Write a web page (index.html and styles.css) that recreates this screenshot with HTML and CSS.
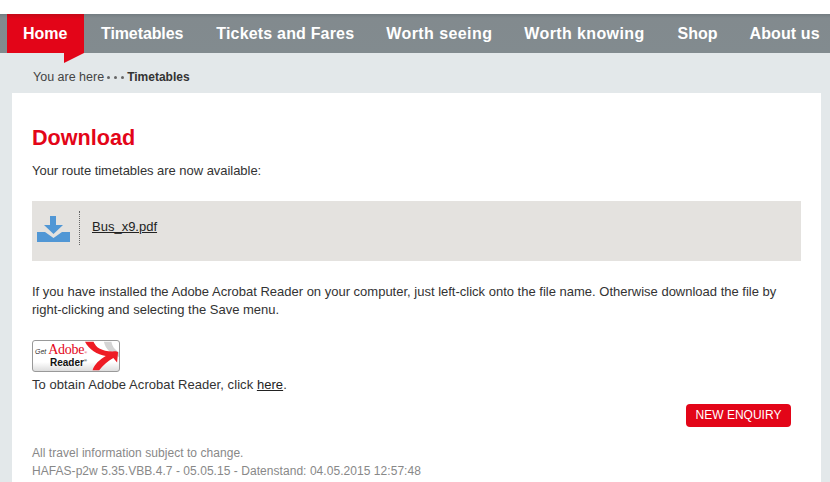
FILE: index.html
```html
<!DOCTYPE html>
<html lang="en">
<head>
<meta charset="utf-8">
<title>Download</title>
<link rel="stylesheet" href="styles.css">
</head>
<body>
<div class="top"></div>
<nav class="nav">
  <a class="item home">Home</a>
  <a class="item i1">Timetables</a>
  <a class="item i2">Tickets and Fares</a>
  <a class="item i3">Worth seeing</a>
  <a class="item i4">Worth knowing</a>
  <a class="item i5">Shop</a>
  <a class="item i6">About us</a>
</nav>
<div class="crumb"><span class="here">You are here</span><span class="dots"><i></i><i></i><i></i></span><b>Timetables</b></div>
<main class="card">
  <h1>Download</h1>
  <p class="intro">Your route timetables are now available:</p>
  <div class="file">
    <svg class="dl" width="33" height="26" viewBox="0 0 33 26"><path fill="#5197d5" d="M13 0h6v9h7l-9.500 9L7 9h6zM0 16h8l8.500 6 8.500-6h8v10H0z"/></svg>
    <a class="link">Bus_x9.pdf</a>
  </div>
  <p class="para">If you have installed the Adobe Acrobat Reader on your computer, just left-click onto the file name. Otherwise download the file by right-clicking and selecting the Save menu.</p>
  <div class="badge">
    <div class="badge-text">
      <div class="l1"><i>Get</i><span>Adobe</span><sup>®</sup></div>
      <div class="l2">Reader<sup>®</sup></div>
    </div>
    <svg class="swoosh" width="36" height="30" viewBox="0 0 36 30"><path fill="#d4d4d4" d="M20 0h8c1 5 3 8 8 11v5C27 13 22 8 20 0z"/><path fill="#ee1c25" d="M0 0h9c3 7 10 11 24 10l2 1-1 11-4-5C24 20 19 25 15 30H8c2-6 7-11 14-15C13 14 4 8 0 0z"/></svg>
  </div>
  <p class="obtain">To obtain Adobe Acrobat Reader, click <a class="link">here</a>.</p>
  <div class="actions"><a class="btn">NEW ENQUIRY</a></div>
  <p class="foot">All travel information subject to change.<br>HAFAS-p2w 5.35.VBB.4.7 - 05.05.15 - Datenstand: 04.05.2015 12:57:48</p>
</main>
</body>
</html>
```

FILE: styles.css
```css
* { box-sizing: border-box; }
html, body { margin: 0; height: 482px; overflow: hidden; }
body { background: #e3e8ea; font-family: "Liberation Sans", Arial, sans-serif; font-size: 13px; color: #333; }
.top { height: 14px; background: #fff; }
.nav { display: flex; height: 39px; background: linear-gradient(#747d82 0, #828a8e 4px, #828b8f 100%); }
.item { font-size: 16px; font-weight: bold; line-height: 39px; color: #fff; white-space: nowrap; }
.home { position: relative; width: 77px; margin-left: 7px; padding-left: 16px; background: linear-gradient(#c40a18 0, #e30518 5px); }
.home::after { content: ""; position: absolute; left: 57px; top: 39px; border-style: solid; border-width: 10px 20px 0 0; border-color: #e30518 transparent transparent transparent; }
.i1 { margin-left: 17px; letter-spacing: -0.1px; }
.i2 { margin-left: 33px; letter-spacing: 0.18px; }
.i3 { margin-left: 32px; letter-spacing: 0.42px; }
.i4 { margin-left: 32px; letter-spacing: 0.38px; }
.i5 { margin-left: 33px; }
.i6 { margin-left: 32px; letter-spacing: 0.1px; }
.crumb { display: flex; align-items: center; height: 40px; padding: 8px 0 0 33px; font-size: 12px; color: #444; }
.here { font-size: 12.500px; }
.dots { display: flex; gap: 4px; margin: 1px 3px 0 3px; }
.dots i { width: 3px; height: 3px; border-radius: 50%; background: #666; }
.crumb b { color: #333; }
.card { margin: 0 9px 0 12px; height: 400px; background: #fff; padding: 31px 20px 0; }
h1 { margin: 0; font-size: 21.600px; line-height: 28px; font-weight: bold; color: #e30518; }
.intro { margin: 11px 0 0; line-height: 16px; letter-spacing: -0.04px; }
.file { display: flex; align-items: center; height: 60px; margin-top: 22px; background: #e4e2df; position: relative; padding-left: 5px; }
.dl { margin-bottom: 4px; }
.link { color: #222; text-decoration: underline; }
.file .link { margin-left: 22px; padding-bottom: 10px; }
.file::before { content: ""; position: absolute; left: 47px; top: 10px; height: 34px; border-left: 1px dotted #666; }
.para { margin: 22px 0 0; line-height: 18px; width: 750px; }
.badge { display: flex; justify-content: space-between; width: 88px; height: 32px; margin-top: 21px; border: 1px solid #999; border-radius: 3px; background: linear-gradient(#fff 70%, #ddd); overflow: hidden; }
.badge-text { flex: none; width: 52px; padding: 1px 0 0 2px; }
.l1 { display: flex; align-items: baseline; height: 15px; line-height: 15px; font-family: "Liberation Serif", serif; font-size: 14px; letter-spacing: -0.3px; color: #e30518; white-space: nowrap; }
.l1 i { font-size: 7px; color: #333; margin-right: 2px; font-family: "Liberation Sans", sans-serif; letter-spacing: 0; }
.l1 sup { font-size: 4px; line-height: 0; }
.l2 { font-size: 10px; line-height: 11px; font-weight: bold; color: #111; padding-left: 15px; white-space: nowrap; }
.l2 sup { font-size: 4px; line-height: 0; }
.obtain { margin: 5px 0 0; line-height: 16px; letter-spacing: 0.06px; }
.actions { display: flex; justify-content: flex-end; margin-top: 11px; padding-right: 10px; }
.btn { width: 105px; height: 23px; background: #e30518; border-radius: 4px; color: #fff; text-align: center; line-height: 23px; font-size: 12px; }
.foot { margin: 17px 0 0; font-size: 12px; line-height: 18px; letter-spacing: 0.05px; color: #888; }
```
